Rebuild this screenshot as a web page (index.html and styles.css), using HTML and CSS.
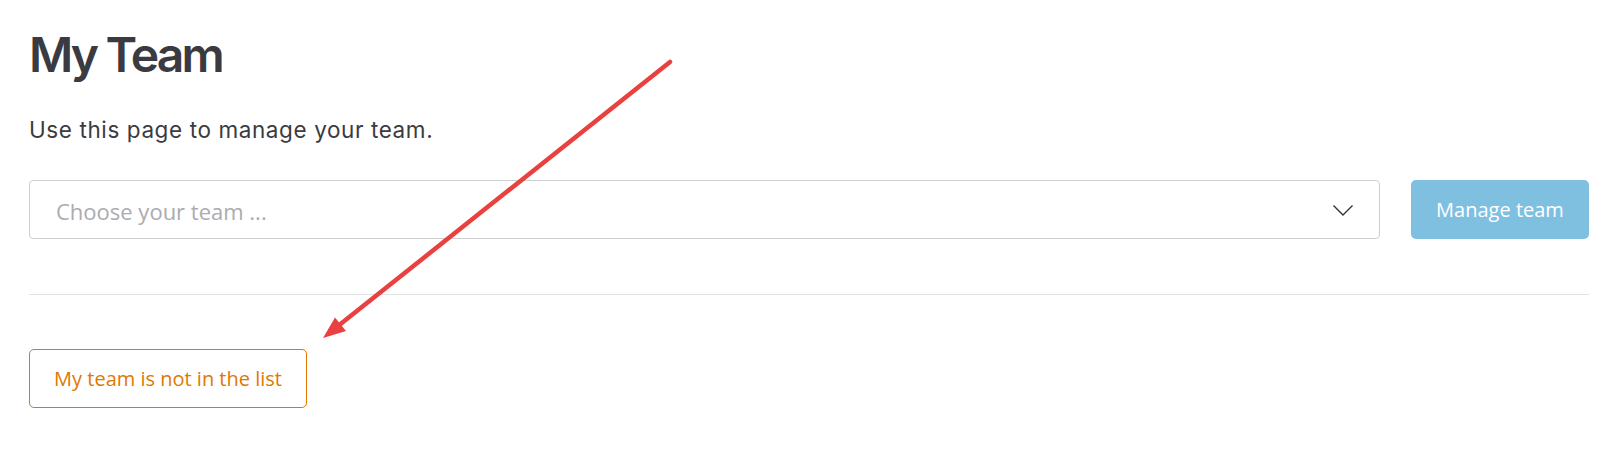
FILE: index.html
```html
<!DOCTYPE html>
<html lang="en">
<head>
<meta charset="utf-8">
<title>My Team</title>
<link rel="stylesheet" href="styles.css">
</head>
<body>
<main class="page">
  <h1 class="title">My Team</h1>
  <p class="lead">Use this page to manage your team.</p>
  <div class="picker-row">
    <div class="select">
      <span class="placeholder">Choose your team ...</span>
      <svg class="chevron" width="20" height="11" viewBox="0 0 20 11"><path d="M0.5 0.5 L10 10 L19.5 0.5" fill="none" stroke="#333" stroke-width="1.4"/></svg>
    </div>
    <button class="btn-primary" type="button">Manage team</button>
  </div>
  <hr class="divider">
  <button class="btn-outline" type="button">My team is not in the list</button>
</main>
<svg class="annotation" width="1624" height="455" viewBox="0 0 1624 455">
  <line x1="670" y1="62" x2="338" y2="326" stroke="#e8413f" stroke-width="4.5" stroke-linecap="round"/>
  <polygon points="323,338 335,317.5 346,331" fill="#e8413f"/>
</svg>
</body>
</html>
```
FILE: styles.css
```css
html, body {
  margin: 0;
  padding: 0;
  background: #ffffff;
}
body {
  position: relative;
  width: 1624px;
  height: 455px;
  overflow: hidden;
  font-family: Inter, "Liberation Sans", sans-serif;
  color: #3b3b42;
}
.page {
  width: 1560px;
  padding: 26px 0 0 29px;
}
.title {
  margin: 0;
  font-size: 48px;
  font-weight: 600;
  line-height: 58px;
  letter-spacing: -2.8px;
  color: #3a3a40;
}
.lead {
  margin: 32px 0 0 0;
  font-size: 22.5px;
  line-height: 28px;
  letter-spacing: 0.6px;
  color: #3b3b42;
}
.picker-row {
  display: flex;
  gap: 31px;
  margin-top: 36px;
}
.select {
  flex: 1;
  height: 59px;
  box-sizing: border-box;
  border: 1px solid #cfcfd2;
  border-radius: 4px;
  display: flex;
  align-items: center;
  justify-content: space-between;
  padding: 0 26px 0 26px;
}
.placeholder {
  font-family: "Open Sans", "Noto Sans", sans-serif;
  font-size: 22px;
  color: #ababb0;
  margin-top: 3px;
}
.chevron {
  display: block;
  margin-top: 1px;
}
.btn-primary {
  width: 178px;
  height: 59px;
  border: none;
  border-radius: 5px;
  background: #7fc0e1;
  color: #ffffff;
  font-family: "Open Sans", "Noto Sans", sans-serif;
  font-size: 20px;
  padding: 0;
}
.divider {
  margin: 55px 0 0 0;
  border: none;
  border-top: 1px solid #e2e2e4;
  height: 0;
}
.btn-outline {
  margin-top: 54px;
  width: 278px;
  height: 59px;
  box-sizing: border-box;
  border: 1px solid #e07800;
  border-radius: 5px;
  background: #ffffff;
  color: #e07800;
  font-family: "Open Sans", "Noto Sans", sans-serif;
  font-size: 20px;
  padding: 0;
}
.annotation {
  position: absolute;
  left: 0;
  top: 0;
  pointer-events: none;
}
```
